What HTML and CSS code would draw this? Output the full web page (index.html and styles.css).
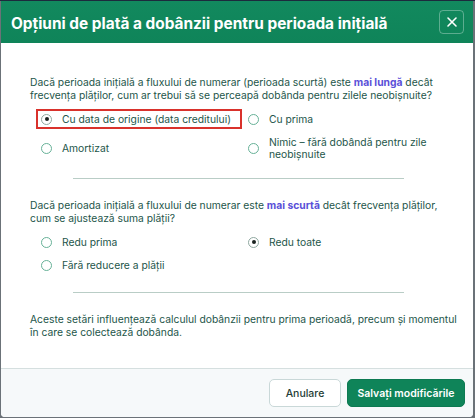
FILE: index.html
```html
<!DOCTYPE html>
<html lang="ro">
<head>
<meta charset="utf-8">
<link rel="stylesheet" href="styles.css">
</head>
<body>
<div class="dialog">
  <header class="dlg-head">
    <h1 class="dlg-title">Opțiuni de plată a dobânzii pentru perioada inițială</h1>
    <button class="close-btn" aria-label="Închide">
      <svg width="12" height="12" viewBox="0 0 12 12"><path d="M2 2L10 10M10 2L2 10" stroke="#fff" stroke-width="1.6" stroke-linecap="round"/></svg>
    </button>
  </header>
  <main class="dlg-body">
    <p class="question">Dacă perioada inițială a fluxului de numerar (perioada scurtă) este <b class="hl">mai lungă</b> decât frecvența plăților, cum ar trebui să se perceapă dobânda pentru zilele neobișnuite?</p>
    <div class="options">
      <label class="opt marked"><span class="radio checked"></span><span>Cu data de origine (data creditului)</span></label>
      <label class="opt"><span class="radio"></span><span>Cu prima</span></label>
      <label class="opt"><span class="radio"></span><span>Amortizat</span></label>
      <label class="opt"><span class="radio"></span><span class="wrap">Nimic – fără dobândă pentru zile neobișnuite</span></label>
    </div>
    <hr class="divider">
    <p class="question">Dacă perioada inițială a fluxului de numerar este <b class="hl">mai scurtă</b> decât frecvența plăților, cum se ajustează suma plății?</p>
    <div class="options compact">
      <label class="opt"><span class="radio"></span><span>Redu prima</span></label>
      <label class="opt"><span class="radio checked"></span><span>Redu toate</span></label>
      <label class="opt"><span class="radio"></span><span>Fără reducere a plății</span></label>
    </div>
    <hr class="divider">
    <p class="question">Aceste setări influențează calculul dobânzii pentru prima perioadă, precum și momentul în care se colectează dobânda.</p>
  </main>
  <footer class="dlg-foot">
    <button class="btn btn-secondary">Anulare</button>
    <button class="btn btn-primary">Salvați modificările</button>
  </footer>
</div>
</body>
</html>
```
FILE: styles.css
```css
* { box-sizing: border-box; }
html, body { margin: 0; padding: 0; }
body {
  background: #6b7278;
  font-family: Inter, "Noto Sans", sans-serif;
  width: 475px;
  height: 418px;
  overflow: hidden;
  border-top: 1px solid #1c2a3d;
}
.dialog {
  margin: 0 2px 0 1px;
  height: 416px;
  background: #fff;
  border-radius: 0 0 4px 4px;
  display: flex;
  flex-direction: column;
  overflow: hidden;
}
.dlg-head {
  height: 42px;
  background: linear-gradient(180deg, #12895e 0%, #0f8459 100%);
  display: flex;
  align-items: center;
  justify-content: space-between;
  padding: 0 9px 0 10px;
  flex: none;
}
.dlg-title {
  margin: 0 0 -2px;
  color: #fff;
  font-size: 15.4px;
  font-weight: 700;
}
.close-btn {
  width: 25px;
  height: 24px;
  border: 1px solid rgba(255,255,255,0.32);
  border-radius: 4px;
  background: transparent;
  display: flex;
  align-items: center;
  justify-content: center;
  padding: 0;
}
.dlg-body {
  flex: 1;
  padding: 33px 14px 0 29px;
  color: #24564a;
  font-size: 10.3px;
}
.question {
  margin: 0;
  line-height: 13px;
}
.hl { color: #5a4fd8; font-weight: 700; }
.options {
  display: grid;
  grid-template-columns: 204px 1fr;
  column-gap: 3px;
  row-gap: 8px;
  margin: 8px 0 0 7px;
  align-items: center;
}
.options.compact { row-gap: 5px; }
.opt {
  display: flex;
  align-items: center;
  gap: 10px;
  min-height: 18px;
  padding: 0 4px;
  line-height: 12px;
}
.wrap { max-width: 170px; }
.opt.marked {
  outline: 2px solid #d9322c;
  outline-offset: -1px;
}
.radio {
  flex: none;
  width: 11px;
  height: 11px;
  border-radius: 50%;
  border: 1px solid #66b197;
  background: #fff;
  display: flex;
  align-items: center;
  justify-content: center;
}
.radio.checked { border-color: #8fa8a0; }
.radio.checked::after {
  content: "";
  width: 4px;
  height: 4px;
  border-radius: 50%;
  background: #1b2320;
}
.divider {
  width: 331px;
  margin: 18px 0 20px 43px;
  border: 0;
  border-top: 1px solid #b9cdc6;
}
.dlg-foot {
  flex: none;
  height: 49px;
  background: #f6f9fa;
  border-top: 1px solid #d5dfdf;
  display: flex;
  justify-content: flex-end;
  align-items: center;
  gap: 6px;
  padding: 0 8px;
}
.btn {
  height: 28px;
  border-radius: 5px;
  font-family: Inter, "Noto Sans", sans-serif;
  font-size: 10.5px;
  font-weight: 500;
  padding: 0;
}
.btn-secondary {
  width: 72px;
  background: #fff;
  border: 1px solid #c9d8d8;
  color: #1f3d36;
}
.btn-primary {
  width: 118px;
  background: #0f8459;
  border: 1px solid #0d7a52;
  color: #fff;
  font-weight: 600;
}
```
